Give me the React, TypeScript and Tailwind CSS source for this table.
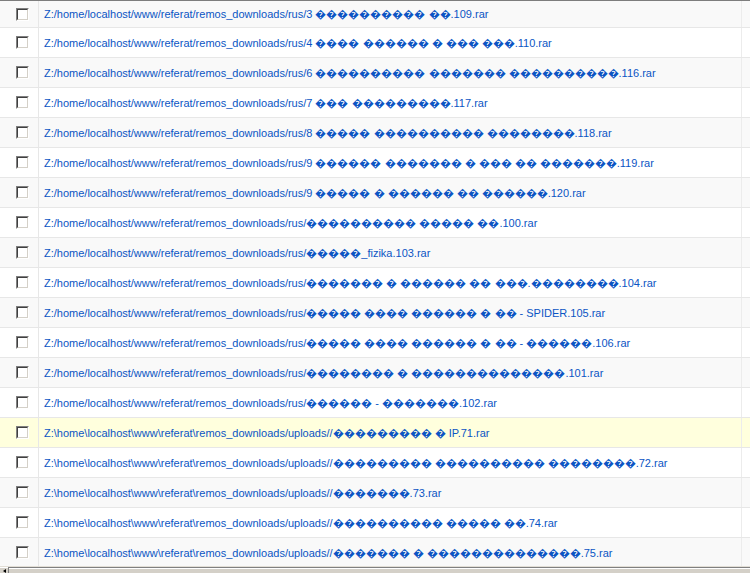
const D = '\uFFFD';
const d = (n: number) => D.repeat(n);

const RUS = 'Z:/home/localhost/www/referat/remos_downloads/rus/';
const UPL = 'Z:\\home\\localhost\\www\\referat\\remos_downloads/uploads//';

const files: string[] = [
  `${RUS}3 ${d(10)} ${d(2)}.109.rar`,
  `${RUS}4 ${d(4)} ${d(6)} ${d(1)} ${d(3)} ${d(3)}.110.rar`,
  `${RUS}6 ${d(10)} ${d(7)} ${d(10)}.116.rar`,
  `${RUS}7 ${d(3)} ${d(9)}.117.rar`,
  `${RUS}8 ${d(5)} ${d(10)} ${d(8)}.118.rar`,
  `${RUS}9 ${d(6)} ${d(7)} ${d(1)} ${d(3)} ${d(2)} ${d(7)}.119.rar`,
  `${RUS}9 ${d(5)} ${d(1)} ${d(6)} ${d(2)} ${d(6)}.120.rar`,
  `${RUS}${d(10)} ${d(5)} ${d(2)}.100.rar`,
  `${RUS}${d(5)}_fizika.103.rar`,
  `${RUS}${d(7)} ${d(1)} ${d(6)} ${d(2)} ${d(3)}.${d(8)}.104.rar`,
  `${RUS}${d(5)} ${d(4)} ${d(6)} ${d(1)} ${d(2)} - SPIDER.105.rar`,
  `${RUS}${d(5)} ${d(4)} ${d(6)} ${d(1)} ${d(2)} - ${d(6)}.106.rar`,
  `${RUS}${d(8)} ${d(1)} ${d(14)}.101.rar`,
  `${RUS}${d(6)} - ${d(7)}.102.rar`,
  `${UPL}${d(9)} ${d(1)} IP.71.rar`,
  `${UPL}${d(9)} ${d(10)} ${d(8)}.72.rar`,
  `${UPL}${d(7)}.73.rar`,
  `${UPL}${d(10)} ${d(5)} ${d(2)}.74.rar`,
  `${UPL}${d(7)} ${d(1)} ${d(14)}.75.rar`,
];

function Checkbox() {
  return (
    <span className="block w-[13px] h-[13px] border border-t-[#808080] border-l-[#808080] border-b-white border-r-white">
      <span className="block w-full h-full bg-white border border-t-[#404040] border-l-[#404040] border-b-[#d4d0c8] border-r-[#d4d0c8]" />
    </span>
  );
}

export default function App() {
  return (
    <div className="w-[750px] h-[573px] bg-white overflow-hidden flex flex-col font-['Liberation_Sans',Arial,sans-serif] text-[11px]">
      <div className="h-px bg-[#7d7d7d] shrink-0" />

      <div className="flex-1 overflow-hidden">
        {files.map((name, i) => {
          const hover = i === 14;
          const bg = hover ? 'bg-[#ffffdd]' : i % 2 === 0 ? 'bg-[#f9f9f9]' : 'bg-white';
          return (
            <div
              key={i}
              className={`flex border-b border-[#e7e7e7] ${i === 0 ? 'h-[27px]' : 'h-[30px]'}`}
            >
              <div className={`w-[39px] shrink-0 flex items-center pl-[16px] border-r border-[#e7e7e7] ${bg}`}>
                <Checkbox />
              </div>
              <div className={`w-[703px] shrink-0 flex items-center pl-[5px] pt-px border-r border-[#ececec] ${bg}`}>
                <a className="text-[#0b55c4] whitespace-nowrap cursor-pointer">{name}</a>
              </div>
              <div className={`flex-1 ${bg}`} />
            </div>
          );
        })}
      </div>

      {/* horizontal scrollbar */}
      <div className="h-[7px] shrink-0 flex border-t border-[#e2ded6] bg-[#d4d0c8]">
        <div className="w-[8px] border-t border-white flex justify-center pt-px">
          <span className="block w-0 h-0 border-y-[2px] border-y-transparent border-r-[3px] border-r-black" />
        </div>
        <div className="w-px bg-[#808080]" />
        <div className="flex-1 flex flex-col">
          <div className="h-px bg-[#808080]" />
          <div className="h-px bg-white" />
          <div className="flex-1 bg-[#d4d0c8]" />
        </div>
      </div>
    </div>
  );
}
